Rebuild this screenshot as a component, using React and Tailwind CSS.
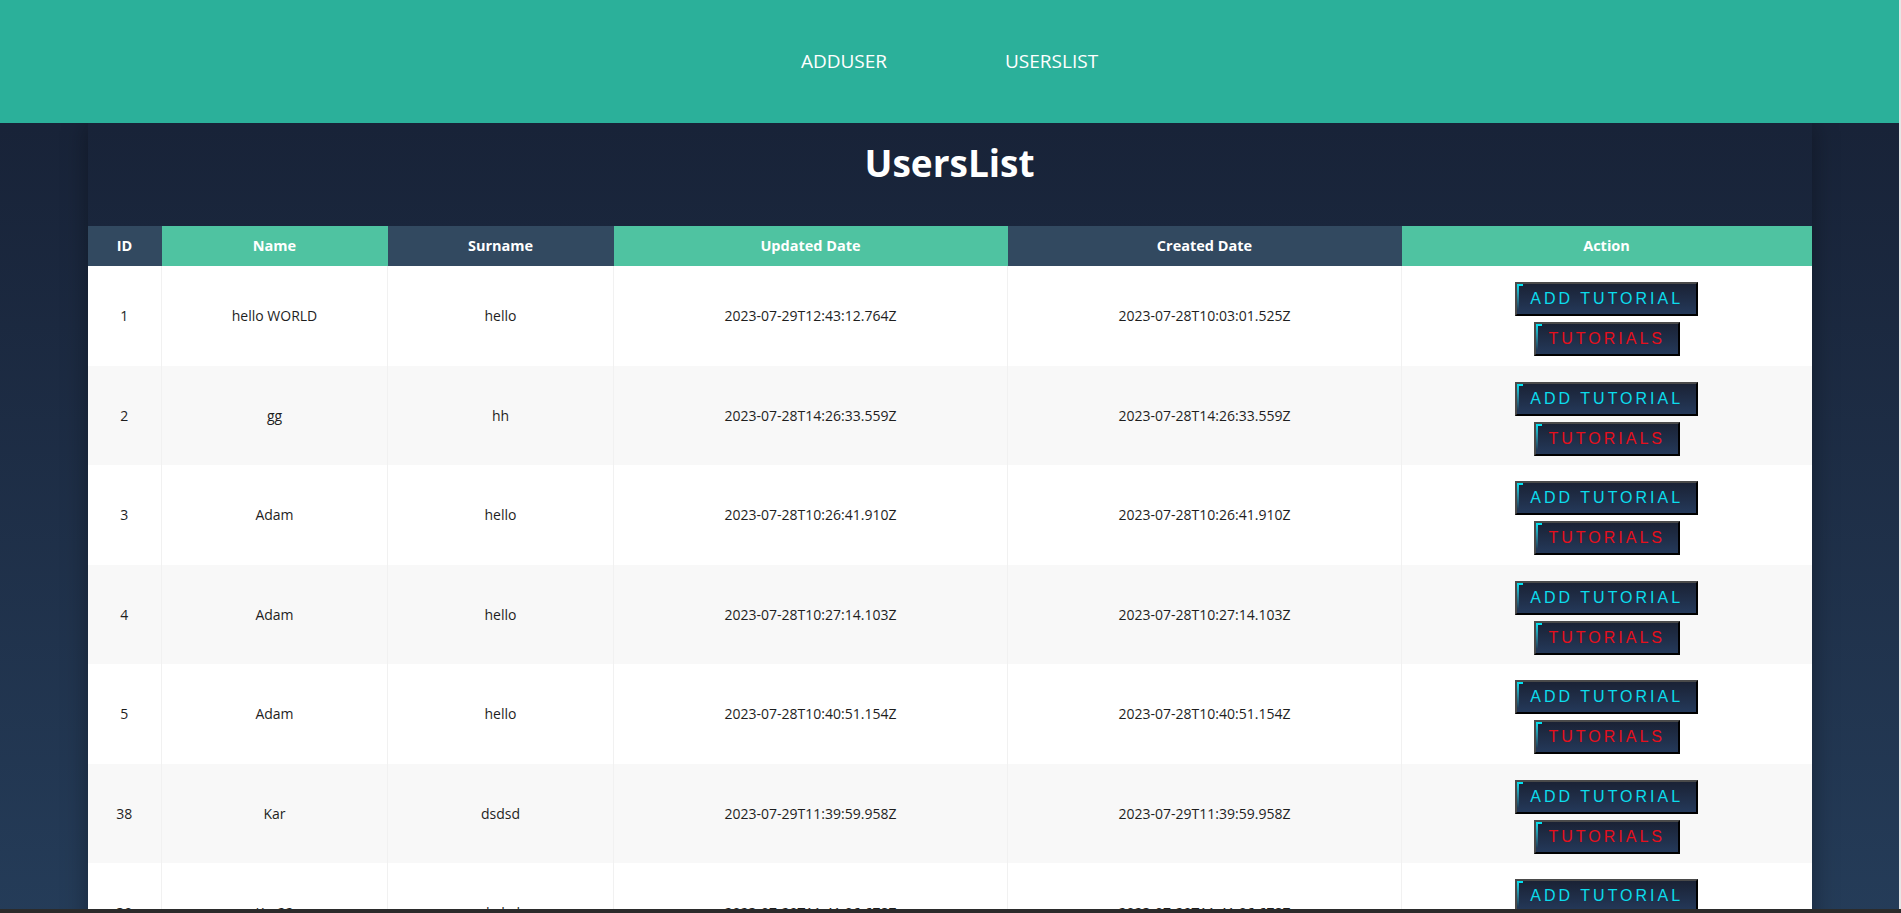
import React from "react";

const rows = [
  { id: 1, name: "hello WORLD", surname: "hello", updated: "2023-07-29T12:43:12.764Z", created: "2023-07-28T10:03:01.525Z" },
  { id: 2, name: "gg", surname: "hh", updated: "2023-07-28T14:26:33.559Z", created: "2023-07-28T14:26:33.559Z" },
  { id: 3, name: "Adam", surname: "hello", updated: "2023-07-28T10:26:41.910Z", created: "2023-07-28T10:26:41.910Z" },
  { id: 4, name: "Adam", surname: "hello", updated: "2023-07-28T10:27:14.103Z", created: "2023-07-28T10:27:14.103Z" },
  { id: 5, name: "Adam", surname: "hello", updated: "2023-07-28T10:40:51.154Z", created: "2023-07-28T10:40:51.154Z" },
  { id: 38, name: "Kar", surname: "dsdsd", updated: "2023-07-29T11:39:59.958Z", created: "2023-07-29T11:39:59.958Z" },
  { id: 39, name: "Kar22", surname: "dsdsd", updated: "2023-07-29T11:41:06.678Z", created: "2023-07-29T11:41:06.678Z" },
  { id: 40, name: "Kar", surname: "dsdsd", updated: "2023-07-29T11:42:10.112Z", created: "2023-07-29T11:42:10.112Z" },
];

function GameButton({ children, color }) {
  return (
    <button
      className={`relative h-[34px] px-[13px] border-2 border-t-[#4a4a4a] border-l-[#4a4a4a] border-r-black border-b-black bg-gradient-to-b from-[#1a2235] to-[#24395a] text-[16px] leading-[18px] tracking-[3px] ${color}`}
      style={{ fontFamily: '"Liberation Sans", Arial, sans-serif' }}
    >
      <span className="absolute left-0 top-0 w-[6px] h-[2px] bg-[#00e1f0]" />
      <span className="absolute left-0 top-0 w-[2px] h-[26px] bg-gradient-to-b from-[#00e1f0] to-[#1d3a55]" />
      {children}
    </button>
  );
}

export default function App() {
  const th = "h-[40px] text-white font-bold text-[14.5px] text-center align-middle";
  const td = "text-center align-middle text-[14px] text-[#1e1e1e] border-r border-[#f1f1f1]";
  return (
    <div
      className="min-h-screen w-[1899px] bg-gradient-to-b from-[#161f33] to-[#27415f]"
      style={{ fontFamily: '"Open Sans", "Noto Sans", sans-serif' }}
    >
      <header className="relative z-10 h-[123px] bg-[#2bb09a] flex items-center justify-center gap-[118px] text-white text-[19px]">
        <a className="cursor-pointer">ADDUSER</a>
        <a className="cursor-pointer">USERSLIST</a>
      </header>

      <main className="mx-auto w-[1724px] shadow-[0_0_24px_rgba(0,0,0,0.35)]">
        <h1 className="pt-[15px] mb-[38px] text-center text-white font-bold text-[37px] leading-[50px]">
          UsersList
        </h1>
        <table className="w-full table-fixed border-collapse">
          <colgroup>
            <col className="w-[74px]" />
            <col className="w-[226px]" />
            <col className="w-[226px]" />
            <col className="w-[394px]" />
            <col className="w-[394px]" />
            <col />
          </colgroup>
          <thead>
            <tr>
              <th className={`${th} bg-[#324960]`}>ID</th>
              <th className={`${th} bg-[#4fc3a1]`}>Name</th>
              <th className={`${th} bg-[#324960]`}>Surname</th>
              <th className={`${th} bg-[#4fc3a1]`}>Updated Date</th>
              <th className={`${th} bg-[#324960]`}>Created Date</th>
              <th className={`${th} bg-[#4fc3a1]`}>Action</th>
            </tr>
          </thead>
          <tbody>
            {rows.map((r, i) => (
              <tr key={r.id} className={i % 2 === 1 ? "bg-[#f8f8f8]" : "bg-white"}>
                <td className={td}>{r.id}</td>
                <td className={td}>{r.name}</td>
                <td className={td}>{r.surname}</td>
                <td className={td}>{r.updated}</td>
                <td className={td}>{r.created}</td>
                <td className="align-middle">
                  <div className="flex flex-col items-center gap-[6px] pt-[16px] pb-[9.5px]">
                    <GameButton color="text-[#0cdcec]">ADD TUTORIAL</GameButton>
                    <GameButton color="text-[#e60f1c]">TUTORIALS</GameButton>
                  </div>
                </td>
              </tr>
            ))}
          </tbody>
        </table>
      </main>

      <div className="fixed right-0 top-0 h-full w-[2px] bg-[#e6e6e6]" />
      <div className="fixed left-0 bottom-0 w-full h-[4px] bg-[#2b2b2b]" />
    </div>
  );
}
